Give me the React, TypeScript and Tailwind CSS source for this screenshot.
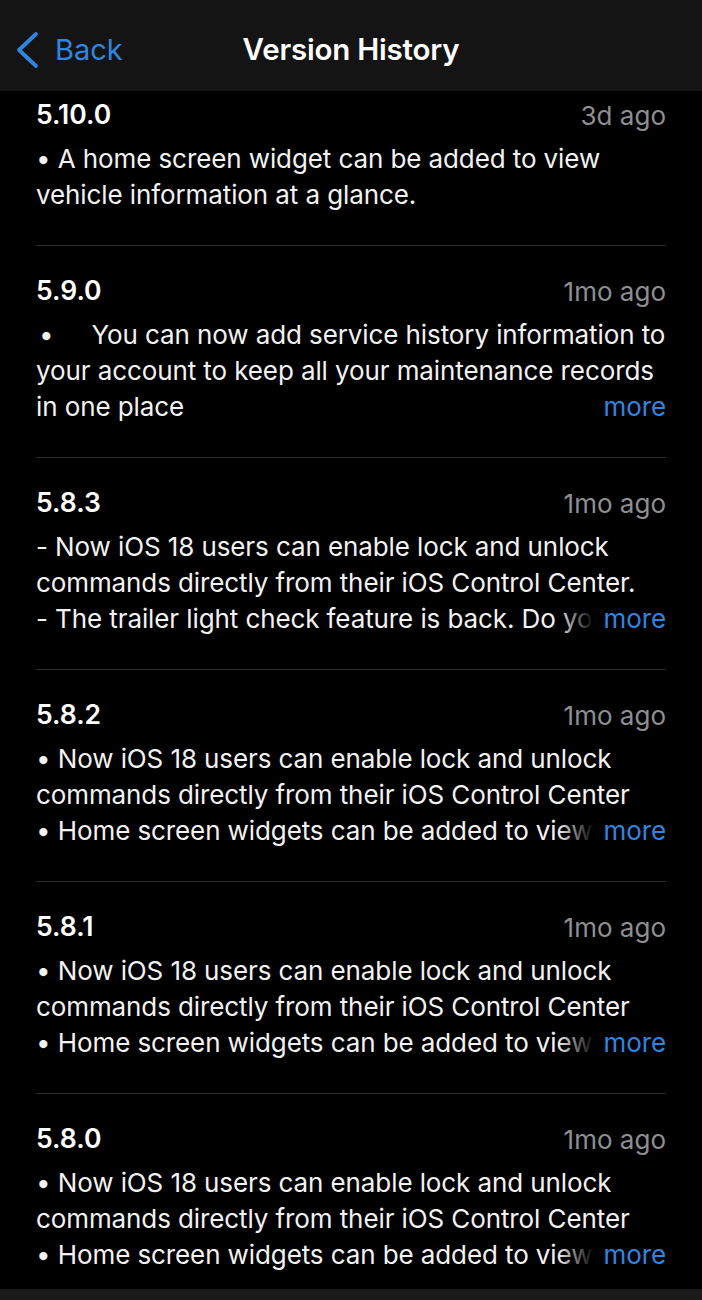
type Release = {
  version: string;
  when: string;
  lines: string[];
  more?: "fade" | "plain";
  indentFirst?: boolean;
};

const releases: Release[] = [
  {
    version: "5.10.0",
    when: "3d ago",
    lines: ["• A home screen widget can be added to view", "vehicle information at a glance."],
  },
  {
    version: "5.9.0",
    when: "1mo ago",
    lines: ["You can now add service history information to", "your account to keep all your maintenance records", "in one place"],
    more: "plain",
    indentFirst: true,
  },
  {
    version: "5.8.3",
    when: "1mo ago",
    lines: [
      "- Now iOS 18 users can enable lock and unlock",
      "commands directly from their iOS Control Center.",
      "- The trailer light check feature is back. Do you have a trailer?",
    ],
    more: "fade",
  },
  {
    version: "5.8.2",
    when: "1mo ago",
    lines: [
      "• Now iOS 18 users can enable lock and unlock",
      "commands directly from their iOS Control Center",
      "• Home screen widgets can be added to view vehicle information",
    ],
    more: "fade",
  },
  {
    version: "5.8.1",
    when: "1mo ago",
    lines: [
      "• Now iOS 18 users can enable lock and unlock",
      "commands directly from their iOS Control Center",
      "• Home screen widgets can be added to view vehicle information",
    ],
    more: "fade",
  },
  {
    version: "5.8.0",
    when: "1mo ago",
    lines: [
      "• Now iOS 18 users can enable lock and unlock",
      "commands directly from their iOS Control Center",
      "• Home screen widgets can be added to view vehicle information",
    ],
    more: "fade",
  },
];

function Line({ text, index, release }: { text: string; index: number; release: Release }) {
  const last = index === release.lines.length - 1;
  const content =
    index === 0 && release.indentFirst ? (
      <>
        <span className="pl-[3px]">•</span>
        <span className="pl-[38px]">{text}</span>
      </>
    ) : (
      text
    );

  if (last && release.more === "fade") {
    return (
      <div className="flex h-[36px] whitespace-nowrap leading-[36px]">
        <div className="relative min-w-0 flex-1 overflow-hidden">
          {content}
          <div className="absolute right-0 top-0 h-full w-[36px] bg-gradient-to-r from-transparent to-black" />
        </div>
        <span className="pl-[10px] text-[#2f86e0]">more</span>
      </div>
    );
  }
  if (last && release.more === "plain") {
    return (
      <div className="flex h-[36px] justify-between whitespace-nowrap leading-[36px]">
        <span>{content}</span>
        <span className="text-[#2f86e0]">more</span>
      </div>
    );
  }
  return <div className="h-[36px] whitespace-nowrap leading-[36px]">{content}</div>;
}

export default function App() {
  return (
    <div
      className="flex h-[1300px] w-[702px] flex-col overflow-hidden bg-black text-white"
      style={{ fontFamily: "Inter, 'Noto Sans', sans-serif" }}
    >
      <header className="relative flex h-[91px] shrink-0 items-center justify-center bg-[#141414] pt-[8px]">
        <div className="absolute left-[14px] top-[30px] flex items-center text-[#2f86e0]">
          <svg width="26" height="40" viewBox="0 0 26 40" fill="none">
            <path d="M22 4 L5 20 L22 36" stroke="currentColor" strokeWidth="3.8" strokeLinecap="round" strokeLinejoin="round" />
          </svg>
          <span className="ml-[15px] text-[29px] leading-[40px]">Back</span>
        </div>
        <h1 className="text-[29.5px] font-semibold tracking-[-0.2px]">Version History</h1>
      </header>

      <main className="flex-1 overflow-hidden px-[36px]">
        {releases.map((r, i) => (
          <section
            key={r.version}
            className={`pb-[32px] ${i === 0 ? "pt-[6px]" : "border-t border-[#2a2a2a] pt-[27px]"}`}
          >
            <div className="flex h-[36px] items-center justify-between">
              <span className="text-[26.5px] font-semibold">{r.version}</span>
              <span className="text-[26px] text-[#8e8e93]">{r.when}</span>
            </div>
            <div className="mt-[8px] text-[26px] tracking-[-0.1px] text-[#f2f2f2]">
              {r.lines.map((l, j) => (
                <Line key={j} text={l} index={j} release={r} />
              ))}
            </div>
          </section>
        ))}
      </main>

      <div className="h-[11px] shrink-0 bg-[#1a1a1a]" />
    </div>
  );
}
